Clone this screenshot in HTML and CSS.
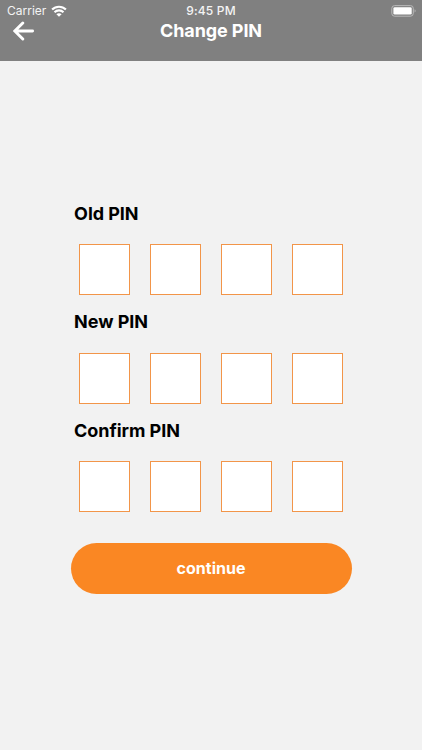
FILE: index.html
```html
<!DOCTYPE html>
<html lang="en">
<head>
<meta charset="utf-8">
<meta name="viewport" content="width=device-width, initial-scale=1">
<title>Change PIN</title>
<link rel="stylesheet" href="styles.css">
</head>
<body>
<header class="header">
  <div class="status">
    <div class="status-left">
      <span>Carrier</span>
      <svg class="wifi" viewBox="0 0 16 12" aria-hidden="true">
        <path d="M1.1 4.6C5 .7 11 .7 14.9 4.6M3.5 7.2c2.5-2.4 6.5-2.4 9 0" fill="none" stroke="#fff" stroke-width="2.1"/>
        <path d="M5.4 9.2c1.5-1.4 3.7-1.4 5.2 0L8 11.8z" fill="#fff"/>
      </svg>
    </div>
    <span class="time">9:45 PM</span>
    <div class="status-right">
      <svg class="battery" viewBox="0 0 26 12" aria-hidden="true">
        <rect x=".8" y=".6" width="21.5" height="10.6" rx="2.8" fill="none" stroke="#b9b9b9" stroke-width="1"/>
        <rect x="2.4" y="2.2" width="18.3" height="7.4" rx="1.4" fill="#fff"/>
        <path d="M23.6 4.3c1.4.5 1.4 2.7 0 3.2z" fill="#b9b9b9"/>
      </svg>
    </div>
  </div>
  <div class="nav">
    <button class="back" aria-label="Back">
      <svg viewBox="0 0 22 20" aria-hidden="true">
        <path d="M19.6 10H2.2M9.8 2 1.8 10l8 8" fill="none" stroke="#fff" stroke-width="2.9" stroke-linecap="round" stroke-linejoin="miter"/>
      </svg>
    </button>
    <h1 class="title">Change PIN</h1>
  </div>
</header>
<main class="form">
  <section class="group">
    <h2 class="label">Old PIN</h2>
    <div class="boxes"><i class="box"></i><i class="box"></i><i class="box"></i><i class="box"></i></div>
  </section>
  <section class="group">
    <h2 class="label">New PIN</h2>
    <div class="boxes"><i class="box"></i><i class="box"></i><i class="box"></i><i class="box"></i></div>
  </section>
  <section class="group">
    <h2 class="label">Confirm PIN</h2>
    <div class="boxes"><i class="box"></i><i class="box"></i><i class="box"></i><i class="box"></i></div>
  </section>
  <button class="continue">continue</button>
</main>
</body>
</html>
```
FILE: styles.css
```css
* { box-sizing: border-box; }
body {
  margin: 0;
  height: 750px;
  background: #f2f2f2;
  font-family: Inter, "Liberation Sans", sans-serif;
  overflow: hidden;
}
button { border: 0; padding: 0; font-family: inherit; }
.header {
  height: 61px;
  background: #808080;
  color: #fff;
}
.status {
  height: 20px;
  padding: 2px 5px 0 7px;
  display: grid;
  grid-template-columns: 1fr auto 1fr;
  align-items: center;
  font-size: 12px;
  line-height: 18px;
  color: #f4f4f4;
}
.status-left { display: flex; align-items: center; gap: 5px; }
.status-right { display: flex; justify-content: flex-end; }
.wifi { width: 16px; height: 12px; }
.battery { width: 26px; height: 12px; }
.time { margin-left: -2px; font-weight: 500; letter-spacing: .2px; }
.nav {
  height: 22px;
  display: grid;
  grid-template-columns: 50px 1fr 50px;
  align-items: center;
}
.back { display: flex; padding-left: 13px; background: none; }
.back svg { width: 22px; height: 20px; }
.title {
  margin: 0;
  text-align: center;
  font-size: 18px;
  line-height: 22px;
  font-weight: 650;
  letter-spacing: -.1px;
}
.form { width: 281px; margin: 141px auto 0 70.5px; }
.group { height: 108.5px; }
.label {
  margin: 0 0 19.6px 3.6px;
  padding-top: 0.8px;
  font-size: 18px;
  line-height: 22px;
  font-weight: 650;
  letter-spacing: -.05px;
  color: #000;
}
.boxes { display: flex; gap: 20px; padding-left: 8.5px; }
.box {
  flex: none;
  width: 51px;
  height: 51px;
  background: #fff;
  border: 1px solid #f29549;
}
.continue {
  display: block;
  width: 281px;
  height: 51px;
  margin-top: 15.5px;
  padding-bottom: 2px;
  border-radius: 26px;
  background: #fa8723;
  color: #fff;
  font-size: 16px;
  font-weight: 650;
}
```
